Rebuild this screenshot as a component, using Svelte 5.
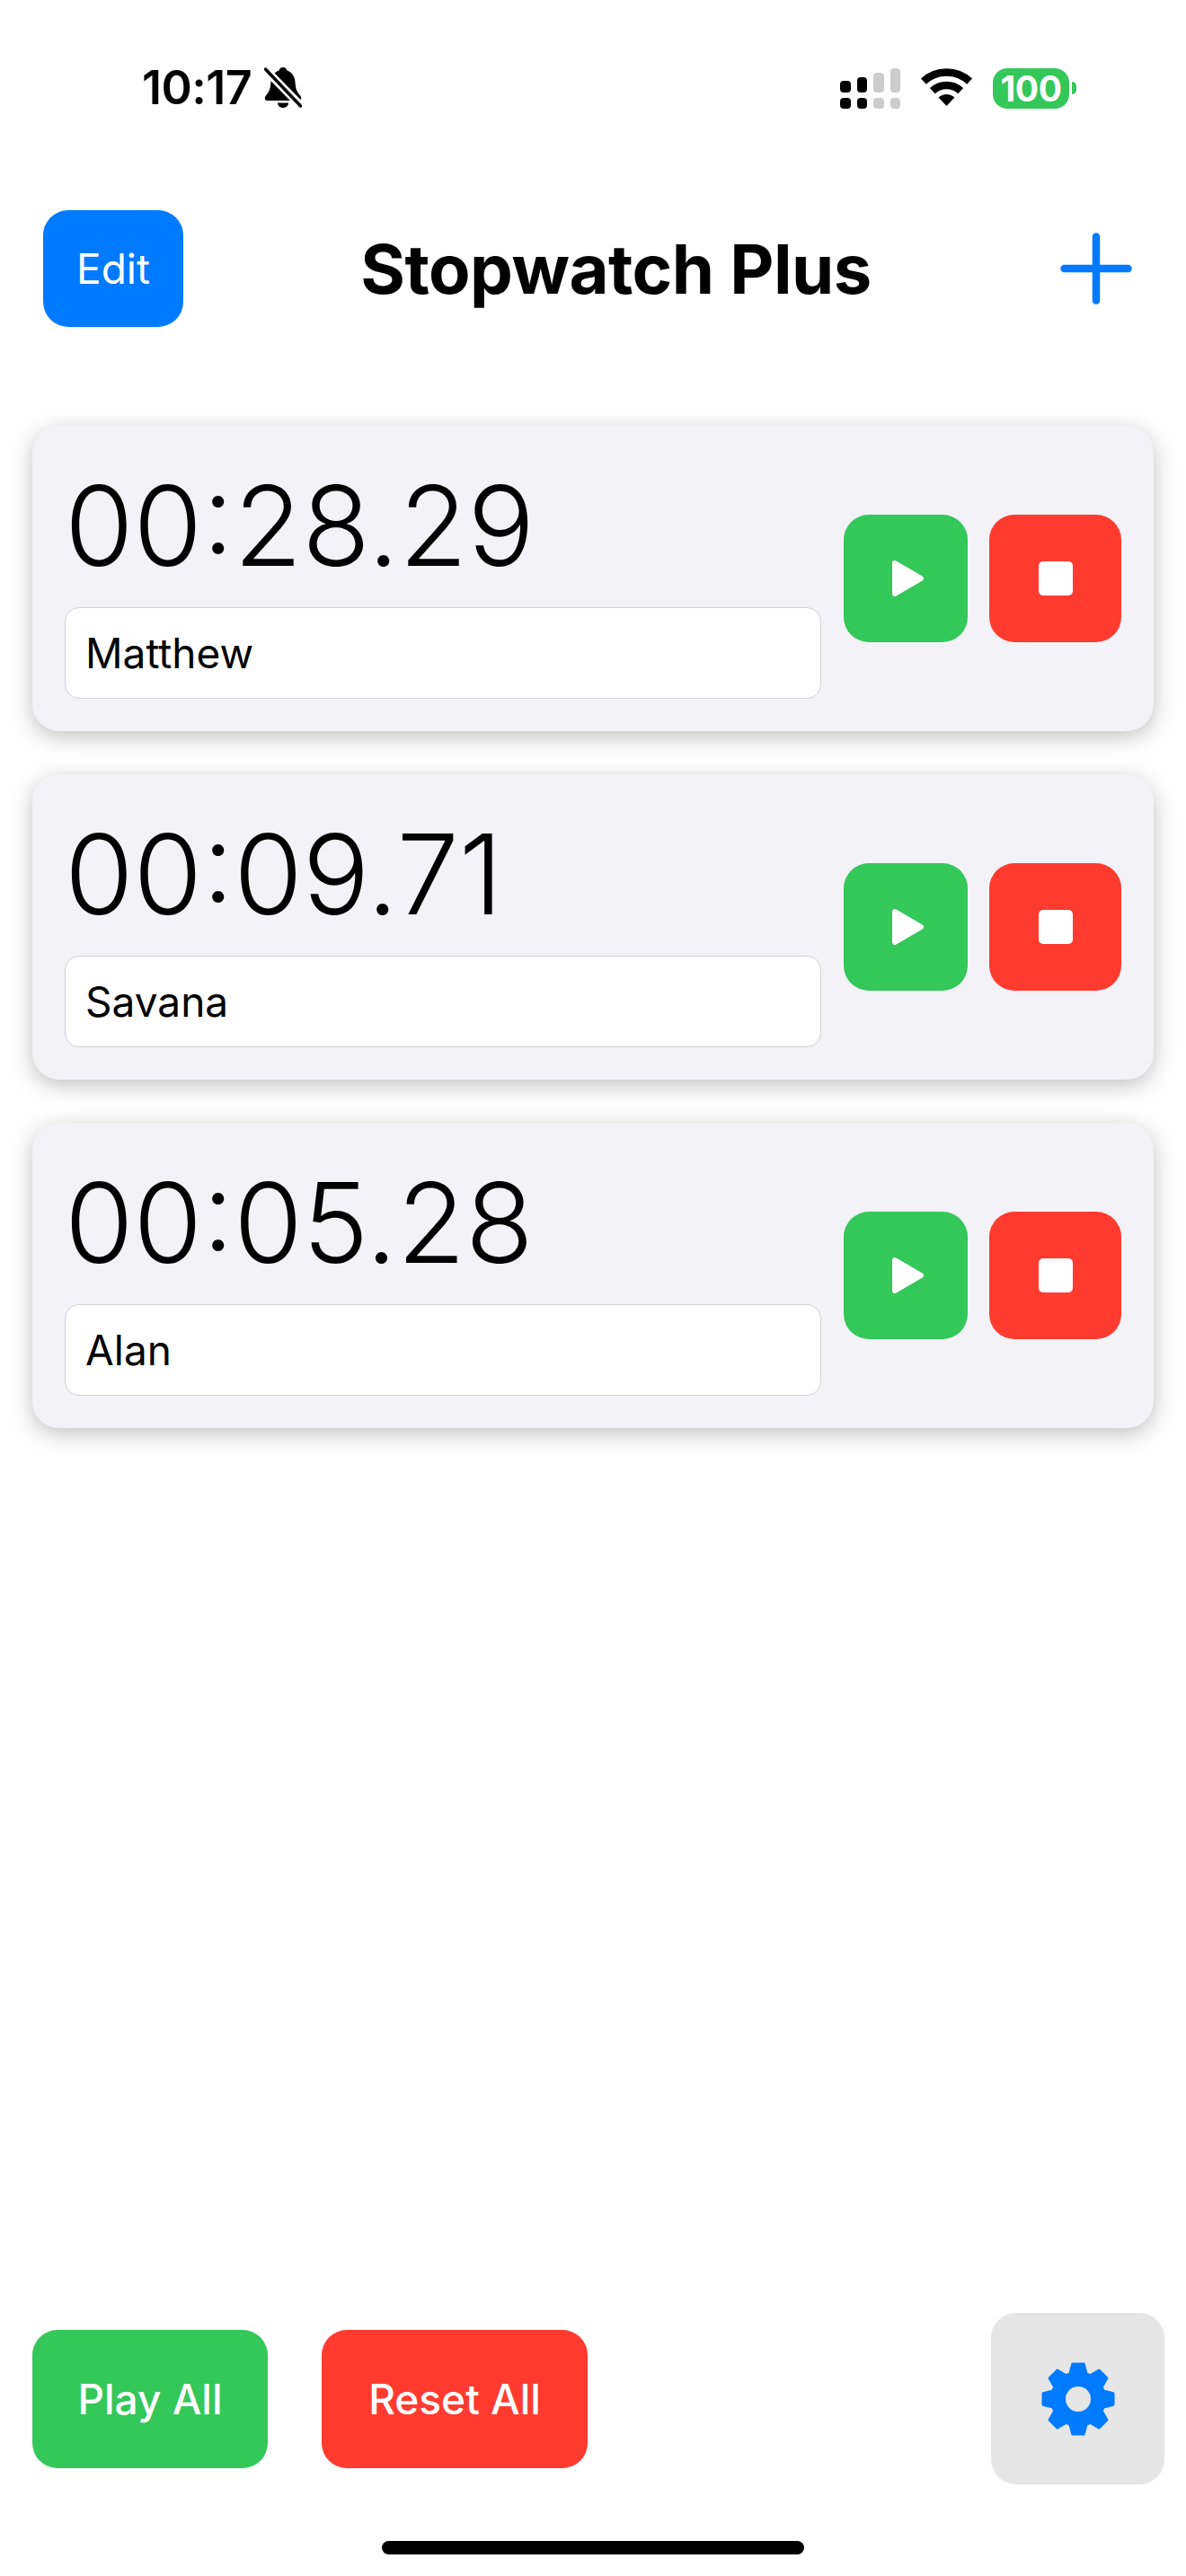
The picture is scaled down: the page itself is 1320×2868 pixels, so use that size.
<script>
  let timers = [
    { id: 1, time: '00:28.29', name: 'Matthew' },
    { id: 2, time: '00:09.71', name: 'Savana' },
    { id: 3, time: '00:05.28', name: 'Alan' },
  ]

  // 8 tooth gear, corners get rounded by the stroke
  function gearPath() {
    const pt = (r, deg) => {
      const a = (deg * Math.PI) / 180
      return `${(r * Math.sin(a)).toFixed(2)} ${(-r * Math.cos(a)).toFixed(2)}`
    }
    const parts = []
    for (let i = 0; i < 8; i++) {
      const c = i * 45
      parts.push(pt(29.5, c - 18), pt(39.5, c - 9), pt(39.5, c + 9), pt(29.5, c + 18))
    }
    return 'M' + parts.join('L') + 'Z'
  }
  const gear = gearPath()
</script>

<div class="screen">
  <div class="status-bar">
    <div class="status-left">
      <span class="clock">10:17</span>
      <svg class="bell" viewBox="0 0 42 45" width="42" height="45">
        <path d="M21 0c2.500 0 4 1.500 4.500 3.500C31 5.500 34 10 34.500 16c.4 5 .8 9 3 12l3 4c1.500 2.500.5 5-2 5H3.500c-2.500 0-3.500-2.500-2-5l3-4c2.200-3 2.600-7 3-12C8 10 11 5.500 16.500 3.500 17 1.500 18.500 0 21 0z" fill="#000" />
        <path d="M15 39.500h12c0 3-2.500 5.500-6 5.500s-6-2.500-6-5.500z" fill="#000" />
        <path d="M-3 -2L45 47" stroke="#fff" stroke-width="9" />
        <path d="M1.500 2L40.500 43" stroke="#000" stroke-width="3.500" stroke-linecap="round" />
      </svg>
    </div>
    <div class="status-right">
      <div class="signal">
        <div class="signal-col"><i class="top h1"></i><i class="low"></i></div>
        <div class="signal-col"><i class="top h2"></i><i class="low"></i></div>
        <div class="signal-col off"><i class="top h3"></i><i class="low"></i></div>
        <div class="signal-col off"><i class="top h4"></i><i class="low"></i></div>
      </div>
      <svg class="wifi" viewBox="0 0 57 42" width="57" height="42">
        <path d="M2.900 14.600A37.500 37.500 0 0 1 54.100 14.600" fill="none" stroke="#000" stroke-width="8.500" />
        <path d="M12.800 25.200A23 23 0 0 1 44.200 25.200" fill="none" stroke="#000" stroke-width="8.500" />
        <path d="M28.500 42L19.600 32.500A13 13 0 0 1 37.400 32.500Z" fill="#000" />
      </svg>
      <div class="battery">
        <span class="battery-body">100</span>
        <span class="battery-cap"></span>
      </div>
    </div>
  </div>

  <header class="nav">
    <button class="edit-btn">Edit</button>
    <h1>Stopwatch Plus</h1>
    <button class="add-btn" aria-label="Add">
      <svg viewBox="0 0 80 80" width="80" height="80">
        <path d="M40 4.500V75.500M4.500 40H75.500" stroke="#007aff" stroke-width="8.500" stroke-linecap="round" fill="none" />
      </svg>
    </button>
  </header>

  <div class="timer-list">
    {#each timers as timer (timer.id)}
      <div class="timer-card">
        <div class="timer-info">
          <div class="time">{timer.time}</div>
          <input class="name-input" type="text" value={timer.name} />
        </div>
        <div class="timer-actions">
          <button class="round-btn play" aria-label="Play">
            <svg viewBox="0 0 35 40" width="35" height="40">
              <path d="M3 3L32 20L3 37Z" fill="#fff" stroke="#fff" stroke-width="6" stroke-linejoin="round" />
            </svg>
          </button>
          <button class="round-btn stop" aria-label="Stop">
            <svg viewBox="0 0 38 38" width="38" height="38">
              <rect width="38" height="38" rx="5" fill="#fff" />
            </svg>
          </button>
        </div>
      </div>
    {/each}
  </div>

  <footer class="bottom-bar">
    <button class="all-btn play-all">Play All</button>
    <button class="all-btn reset-all">Reset All</button>
    <button class="settings-btn" aria-label="Settings">
      <svg viewBox="-42 -42 84 84" width="84" height="84">
        <path d={gear} fill="#007aff" stroke="#007aff" stroke-width="3" stroke-linejoin="round" />
        <circle r="14" fill="#e6e6e6" />
      </svg>
    </button>
  </footer>

  <div class="home-bar"></div>
</div>

<style>
  :global(body) {
    margin: 0;
    background: #fff;
  }

  .screen {
    width: 1320px;
    height: 2868px;
    display: flex;
    flex-direction: column;
    font-family: Inter, "Liberation Sans", sans-serif;
    color: #000;
    background: #fff;
    overflow: hidden;
  }

  button {
    border: none;
    margin: 0;
    padding: 0;
    font-family: inherit;
    cursor: pointer;
    display: flex;
    align-items: center;
    justify-content: center;
  }

  /* status bar */
  .status-bar {
    height: 48px;
    padding: 74px 122px 0 158px;
    display: flex;
    align-items: center;
    justify-content: space-between;
  }

  .status-left {
    display: flex;
    align-items: center;
    gap: 14px;
  }

  .clock {
    font-size: 52px;
    font-weight: 600;
    line-height: 48px;
    letter-spacing: -0.5px;
  }

  .bell {
    display: block;
    margin-top: -2px;
  }

  .status-right {
    display: flex;
    align-items: center;
  }

  .signal {
    display: flex;
    gap: 7px;
    align-items: flex-end;
    height: 45px;
    margin-right: 23px;
  }

  .signal-col {
    width: 11.500px;
    display: flex;
    flex-direction: column;
    gap: 6px;
    color: #000;
  }

  .signal-col.off i {
    background: #ccc;
  }

  .signal-col i {
    display: block;
    background: #000;
    border-radius: 4px;
  }

  .top.h1 { height: 13px; }
  .top.h2 { height: 17px; }
  .top.h3 { height: 22px; }
  .top.h4 { height: 27px; }

  .low {
    height: 12px;
  }

  .wifi {
    display: block;
    margin-right: 23px;
    margin-top: -3px;
  }

  .battery {
    display: flex;
    align-items: center;
    gap: 3px;
  }

  .battery-body {
    width: 85px;
    height: 45px;
    border-radius: 16px;
    background: #34c759;
    color: #fff;
    font-size: 39px;
    font-weight: 700;
    line-height: 45px;
    text-align: center;
    letter-spacing: -0.5px;
  }

  .battery-cap {
    width: 5px;
    height: 14px;
    background: #34c759;
    border-radius: 0 7px 7px 0;
  }

  /* nav */
  .nav {
    margin-top: 112px;
    height: 130px;
    padding: 0 47px 0 48px;
    display: flex;
    align-items: center;
    justify-content: space-between;
  }

  .edit-btn {
    width: 156px;
    height: 130px;
    border-radius: 28px;
    background: #007aff;
    color: #fff;
    font-size: 46px;
  }

  h1 {
    margin: 0;
    font-size: 76px;
    font-weight: 700;
    letter-spacing: -0.5px;
  }

  .add-btn {
    width: 106px;
    height: 130px;
    background: none;
  }

  /* list */
  .timer-list {
    flex: 1;
    margin-top: 98px;
    padding: 12px 36px 0;
    display: flex;
    flex-direction: column;
    gap: 48px;
    overflow: hidden;
  }

  .timer-card {
    height: 340px;
    box-sizing: border-box;
    padding: 36px;
    display: flex;
    align-items: center;
    gap: 25px;
    background: #f2f2f7;
    border-radius: 30px;
    box-shadow: 0 6px 24px rgba(0, 0, 0, 0.25);
  }

  .timer-info {
    flex: 1;
    min-width: 0;
  }

  .time {
    font-size: 124px;
    font-weight: 300;
    line-height: 150px;
    margin-bottom: 16px;
    white-space: nowrap;
  }

  .name-input {
    display: block;
    width: 100%;
    height: 102px;
    box-sizing: border-box;
    padding: 0 22px;
    border: 1.500px solid #d1d1d6;
    border-radius: 16px;
    background: #fff;
    font-family: inherit;
    font-size: 46px;
    color: #000;
    outline: none;
  }

  .timer-actions {
    display: flex;
    gap: 24px;
  }

  .round-btn {
    height: 142px;
    border-radius: 28px;
  }

  .round-btn.play {
    width: 138px;
    background: #34c759;
    padding-left: 5px;
  }

  .round-btn.stop {
    width: 147px;
    background: #ff3b30;
  }

  /* bottom */
  .bottom-bar {
    padding: 0 24px 0 36px;
    display: flex;
    align-items: center;
    gap: 60px;
  }

  .all-btn {
    height: 154px;
    border-radius: 28px;
    color: #fff;
    font-size: 46px;
    font-weight: 500;
  }

  .play-all {
    width: 262px;
    background: #34c759;
  }

  .reset-all {
    width: 296px;
    background: #ff3b30;
  }

  .settings-btn {
    margin-left: auto;
    width: 193px;
    height: 191px;
    border-radius: 28px;
    background: #e6e6e6;
  }

  .settings-btn svg {
    display: block;
  }

  .home-bar {
    width: 470px;
    height: 15px;
    margin: 63px auto 24px;
    background: #000;
    border-radius: 8px;
  }
</style>
